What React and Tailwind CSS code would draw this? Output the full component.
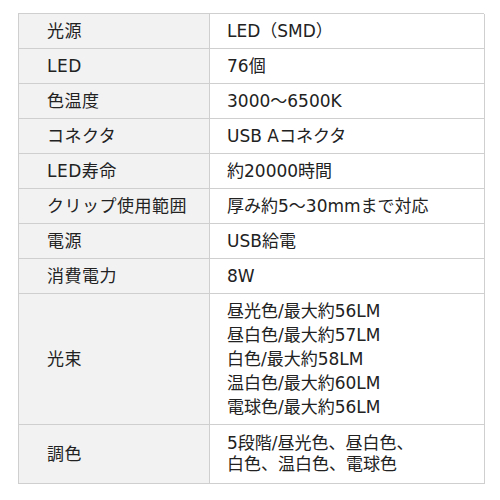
import React from "react";

const rows = [
  { label: "光源", value: ["LED（SMD）"] },
  { label: "LED", value: ["76個"] },
  { label: "色温度", value: ["3000～6500K"] },
  { label: "コネクタ", value: ["USB Aコネクタ"] },
  { label: "LED寿命", value: ["約20000時間"] },
  { label: "クリップ使用範囲", value: ["厚み約5～30mmまで対応"] },
  { label: "電源", value: ["USB給電"] },
  { label: "消費電力", value: ["8W"] },
  {
    label: "光束",
    value: [
      "昼光色/最大約56LM",
      "昼白色/最大約57LM",
      "白色/最大約58LM",
      "温白色/最大約60LM",
      "電球色/最大約56LM",
    ],
  },
  { label: "調色", value: ["5段階/昼光色、昼白色、", "白色、温白色、電球色"], tight: true },
];

const App = () => {
  return (
    <div
      className="w-[500px] h-[500px] bg-white pt-[13px] pl-[18px] text-[#222]"
      style={{ fontFamily: '"DejaVu Sans", "Noto Sans CJK JP", sans-serif' }}
    >
      <div className="grid grid-cols-[191px_275px] w-[466px] border-t border-l border-[#cfcfcf]">
        {rows.map((row) => (
          <React.Fragment key={row.label}>
            <div className="flex items-center bg-[#f2f2f2] border-r border-b border-[#cfcfcf] pl-[28px] text-[17px] tracking-[0.5px] leading-[24px]">
              {row.label}
            </div>
            <div
              className={
                "flex flex-col justify-center border-r border-b border-[#cfcfcf] pl-[17px] text-[17px] " +
                (row.tight ? "py-[8px] leading-[21px]" : "py-[5px] leading-[24px]")
              }
            >
              {row.value.map((line) => (
                <div key={line}>{line}</div>
              ))}
            </div>
          </React.Fragment>
        ))}
      </div>
    </div>
  );
};

export default App;
